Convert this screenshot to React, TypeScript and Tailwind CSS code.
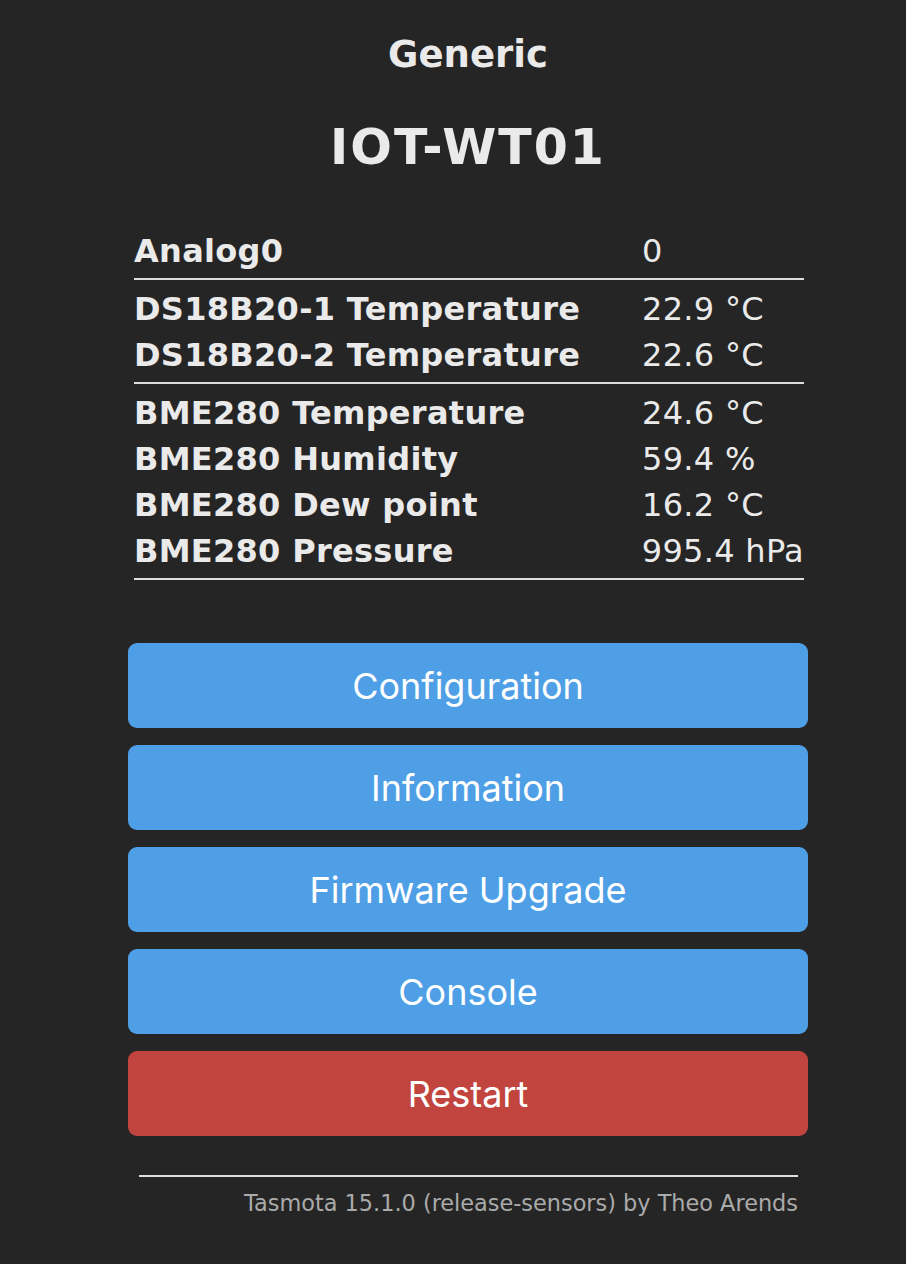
import React from "react";

const rows1 = [["Analog0", "0"]];
const rows2 = [
  ["DS18B20-1 Temperature", "22.9 °C"],
  ["DS18B20-2 Temperature", "22.6 °C"],
];
const rows3 = [
  ["BME280 Temperature", "24.6 °C"],
  ["BME280 Humidity", "59.4 %"],
  ["BME280 Dew point", "16.2 °C"],
  ["BME280 Pressure", "995.4 hPa"],
];

function Row({ label, value }: { label: string; value: string }) {
  return (
    <div className="flex h-[46px] items-center text-[32px] leading-[46px]">
      <div className="w-[508px] font-bold tracking-[0.3px]">{label}</div>
      <div className="whitespace-nowrap tracking-[0.3px]">{value}</div>
    </div>
  );
}

function Sep() {
  return <div className="ml-[6px] mr-[4px] mt-[4px] mb-[6px] h-[2px] bg-[#dcdcdc]" />;
}

function Btn({ label, red }: { label: string; red?: boolean }) {
  return (
    <button
      className={
        "h-[85px] w-full rounded-[9px] text-[36px] text-white " +
        (red ? "bg-[#c2443e]" : "bg-[#4f9fe6]")
      }
      style={{ fontFamily: "Inter, 'Liberation Sans', sans-serif" }}
    >
      {label}
    </button>
  );
}

export default function App() {
  return (
    <div
      className="min-h-[1264px] w-full bg-[#252525] text-[#eaeaea]"
      style={{ fontFamily: "'DejaVu Sans', Verdana, sans-serif" }}
    >
      <div className="flex flex-col items-center pl-[30px]">
        <div className="w-[680px]">
          <div className="pt-[33px] text-center text-[37px] font-bold leading-[44px]">Generic</div>
          <div className="mt-[43px] text-center text-[49px] font-bold leading-[56px] tracking-[2px]">IOT-WT01</div>
          <div className="mt-[52px] pl-[6px] pr-[4px]">
            {rows1.map((r) => (
              <Row key={r[0]} label={r[0]} value={r[1]} />
            ))}
          </div>
          <Sep />
          <div className="pl-[6px] pr-[4px]">
            {rows2.map((r) => (
              <Row key={r[0]} label={r[0]} value={r[1]} />
            ))}
          </div>
          <Sep />
          <div className="pl-[6px] pr-[4px]">
            {rows3.map((r) => (
              <Row key={r[0]} label={r[0]} value={r[1]} />
            ))}
          </div>
          <div className="ml-[6px] mr-[4px] mt-[4px] h-[2px] bg-[#dcdcdc]" />
          <div className="mt-[63px] flex flex-col gap-[17px]">
            <Btn label="Configuration" />
            <Btn label="Information" />
            <Btn label="Firmware Upgrade" />
            <Btn label="Console" />
            <Btn label="Restart" red />
          </div>
          <div className="ml-[11px] mr-[10px] mt-[39px] h-[2px] bg-[#e0e0e0]" />
          <div className="mr-[10px] mt-[12px] text-right text-[22.4px] leading-[28px] text-[#aaaaaa]">
            Tasmota 15.1.0 (release-sensors) by Theo Arends
          </div>
        </div>
      </div>
    </div>
  );
}
